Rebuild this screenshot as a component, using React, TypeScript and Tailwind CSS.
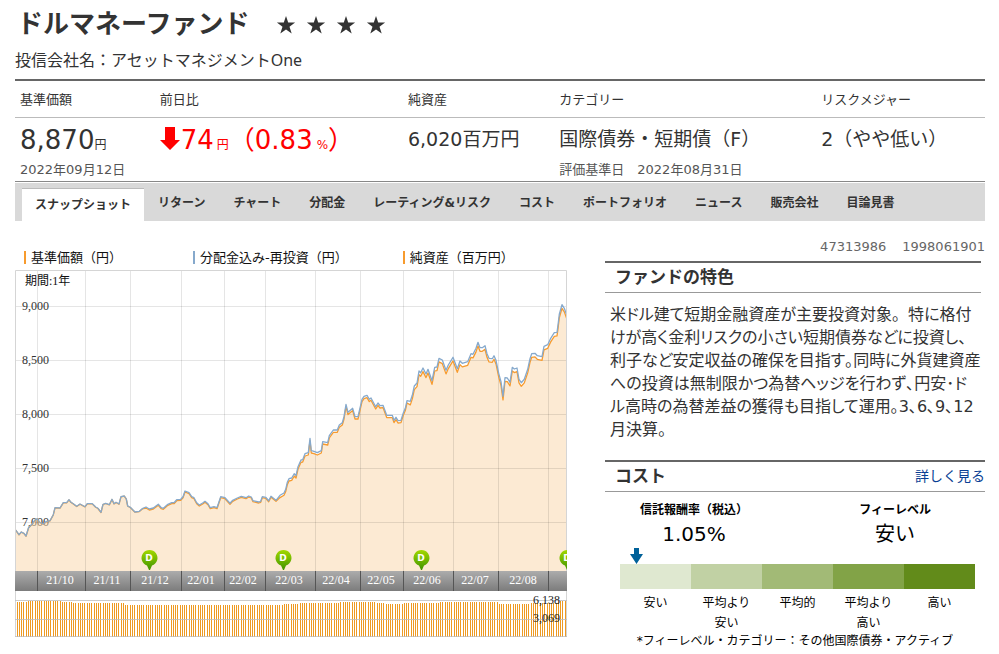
const stats = {
  th: 'pt-[2px] pl-[5px] text-left align-top font-normal text-[13px] leading-[34px]',
  td: 'pl-[5px] align-top',
};

const tabs = [
  'リターン',
  'チャート',
  '分配金',
  'レーティング&リスク',
  'コスト',
  'ポートフォリオ',
  'ニュース',
  '販売会社',
  '目論見書',
];

const feeLevels = [
  { label: '安い', color: 'bg-[#dfe8d0]' },
  { label: '平均より安い', color: 'bg-[#c1d1a4]' },
  { label: '平均的', color: 'bg-[#a2ba76]' },
  { label: '平均より高い', color: 'bg-[#82a347]' },
  { label: '高い', color: 'bg-[#628b1a]' },
];

// x, y pairs of the reinvested price line
const line = [
  [0.7, 260], [4, 264.7], [6.3, 262], [9, 263.3], [11, 266], [13.7, 257.3], [17, 254.3], [20, 250],
  [22.3, 248.7], [24.3, 252], [28.3, 254], [31, 251.7], [35, 250.7], [38.3, 244.7], [40, 237.7],
  [45, 238], [48.3, 232.7], [51.7, 232.7], [54, 229.7], [56, 232.3], [58.3, 233.7], [61.7, 236.3],
  [65, 234], [70, 236.7], [72.3, 233.7], [77.3, 233.7], [80.7, 237], [83, 238.3], [86, 242.3],
  [88, 234.3], [90.7, 233.3], [94.3, 234.7], [97, 229.3], [99, 233.7], [101, 232.3], [104, 234],
  [106, 226.7], [109.3, 226], [111.3, 229], [112.7, 236], [115.3, 237.3], [120, 242], [124.3, 241.3],
  [127.3, 238.7], [131, 237], [134.3, 239], [138.3, 238], [143.3, 234.3], [146.3, 237.7],
  [148.3, 238.3], [152.3, 234.7], [156.7, 232.7], [159, 232.7], [161.7, 229.7], [165.7, 229.3],
  [168, 226.7], [170, 221], [174, 222.7], [176.7, 226.7], [179, 227.7], [181.7, 232.7], [184.3, 235],
  [187.7, 233], [190, 231.3], [193, 233.7], [195.3, 237.7], [199, 236.7], [202, 237.7],
  [205.7, 226.7], [210, 227.7], [215, 233.3], [217.7, 230.3], [222.3, 228], [226.3, 226.3],
  [231, 227.7], [233.7, 226], [236.3, 227], [238, 230.7], [243.7, 232], [245.7, 231.3],
  [247.3, 226.7], [250.7, 227.3], [253.7, 230.7], [256, 226.3], [261, 230.3], [265, 225.3],
  [269, 223], [270.7, 219.3], [272.3, 212.3], [274, 208.7], [276.7, 208], [279.3, 203.7],
  [281, 205.7], [283, 196.7], [286, 190], [287.7, 189.7], [290, 183.7], [293.3, 182.7],
  [295, 168.3], [296.3, 180.7], [299, 181.3], [302.3, 182.7], [306.3, 180.7], [307.7, 171.7],
  [312.7, 172.7], [314.3, 165.7], [318.3, 160], [322.3, 160], [324.3, 155], [327.3, 152.7],
  [329, 146.7], [331, 134.3], [333, 142.3], [337.7, 138.3], [340, 146.7], [343, 146.7], [347, 129.3],
  [349, 126.3], [352, 125.3], [354.3, 129.3], [356, 128], [360.7, 136.7], [363, 133], [365, 135.7],
  [368, 135.3], [371.7, 145.3], [377.3, 145.3], [379, 150.3], [381, 147.3], [383, 150.7],
  [386, 150.3], [388.3, 143], [390.3, 138.3], [392, 130.7], [395.3, 131.3], [397.3, 125.3],
  [399.3, 116], [402, 113], [404, 101], [405.7, 102.7], [408, 98], [411, 104], [413, 99.3],
  [417, 110.7], [419.7, 97.3], [422, 97], [424, 88.3], [427.3, 90], [431, 100.3], [433.3, 95],
  [438, 87.3], [442.3, 98.7], [445, 91], [447.3, 93.3], [452.7, 91.7], [456, 83.7], [458, 84.3],
  [461, 78.3], [463, 72.3], [465, 77.7], [467.3, 77.7], [470, 75.7], [472, 83.7], [474, 88.3],
  [477.3, 88.7], [479, 85.7], [481, 90.3], [483.7, 103.3], [486, 111.7], [488, 126.3], [490, 107.7],
  [492.3, 108], [495, 112.3], [497.3, 97.3], [499.3, 99], [502, 98], [504, 109.3], [506.3, 112.7],
  [509.3, 109.3], [512.7, 99.3], [515, 88.7], [516.7, 83.7], [520, 83.3], [522.3, 85.7],
  [527, 86.7], [529, 76.3], [532.7, 74.7], [535.7, 68.3], [539.3, 62.7], [542, 62.3], [543, 55],
  [544.3, 44.3], [547, 34.7], [549.3, 38.3], [551.7, 45],
];

// the plain price falls further behind after every distribution
const gap = (x: number) => (x < 130 ? 0.2 : x < 265 ? 1 : x < 395 ? 2.3 : 3.6);

const totalPoints = line.map(([x, y]) => `${x},${y}`).join(' ');
const pricePoints = line.map(([x, y]) => `${x},${y + gap(x)}`).join(' ');

const monthLines = [22, 70, 115, 166, 209, 250, 300, 345, 388, 438, 483, 533];
const months = [
  { x: 45, label: '21/10' },
  { x: 92, label: '21/11' },
  { x: 140, label: '21/12' },
  { x: 186, label: '22/01' },
  { x: 228, label: '22/02' },
  { x: 274, label: '22/03' },
  { x: 321, label: '22/04' },
  { x: 366, label: '22/05' },
  { x: 412, label: '22/06' },
  { x: 460, label: '22/07' },
  { x: 508, label: '22/08' },
];
const prices = [
  { y: 36, label: '9,000' },
  { y: 90, label: '8,500' },
  { y: 144, label: '8,000' },
  { y: 198, label: '7,500' },
  { y: 252, label: '7,000' },
];
const pins = [134, 268, 406, 552];

// [until x, top y] of the net asset bars
const assetTops = [
  [12, 332], [47, 331], [58, 332], [110, 333], [268, 335], [285, 334], [325, 333], [362, 332],
  [370, 333], [388, 334], [425, 333], [483, 332], [515, 334], [543, 333], [552, 331],
];
const bars = Array.from({ length: 243 }, (_, i) => {
  const x = 2 + Math.floor(i * 2.265);
  const top = assetTops.find(([end]) => x < end)?.[1] ?? 332;
  return { x, top };
});

function Chart() {
  return (
    <svg viewBox="0 0 552 367" className="block h-auto w-full" role="img" aria-label="基準価額チャート">
      <defs>
        <linearGradient id="axis" x1="0" y1="0" x2="0" y2="1">
          <stop offset="0" stopColor="#acacac" />
          <stop offset="1" stopColor="#7c7c7c" />
        </linearGradient>
        <linearGradient id="pin" x1="0" y1="0" x2="0" y2="1">
          <stop offset="0" stopColor="#a3d900" />
          <stop offset="1" stopColor="#3f9300" />
        </linearGradient>
      </defs>

      <g fontFamily="'Liberation Serif', 'Noto Sans CJK JP', serif" fontSize="12" fill="#333">
        <text x="10" y="15" fill="#111">期間:1年</text>
        {prices.map((p) => (
          <text key={p.label} x="7" y={p.y + 4}>{p.label}</text>
        ))}
      </g>

      <polygon points={`0,301 ${pricePoints} 552,301`} fill="#f9d5a7" fillOpacity="0.5" />
      <g fill="#000" fillOpacity="0.1">
        {prices.map((p) => (
          <rect key={p.y} x="0" y={p.y} width="552" height="1" />
        ))}
        {monthLines.map((x) => (
          <rect key={x} x={x} y="0" width="1" height="301" />
        ))}
      </g>
      <g fill="none" strokeWidth="1.3" strokeLinejoin="round">
        <polyline points={pricePoints} stroke="#f79b2e" />
        <polyline points={totalPoints} stroke="#86a9cc" />
      </g>
      <path d="M0.5 367V0.5H551.5V367" fill="none" stroke="#d5d5d5" />

      <rect x="0" y="301" width="552" height="20" fill="url(#axis)" />
      {monthLines.map((x) => (
        <rect key={x} x={x} y="301" width="1" height="20" fill="#555" />
      ))}
      <g fontFamily="'Liberation Serif', serif" fontSize="12" fill="#fff" textAnchor="middle">
        {months.map((m) => (
          <text key={m.label} x={m.x} y="314">{m.label}</text>
        ))}
      </g>

      {pins.map((x) => (
        <g key={x}>
          <path
            d={`M${x} 300 L${x - 2} 295.5 A8 8 0 1 1 ${x + 3} 295.5 L${x + 1} 300Z`}
            fill="url(#pin)"
          />
          <text
            x={x}
            y="291"
            fontFamily="'DejaVu Sans', sans-serif"
            fontSize="9"
            fontWeight="bold"
            fill="#fff"
            textAnchor="middle"
          >
            D
          </text>
        </g>
      ))}

      <g shapeRendering="crispEdges">
        {bars.map((b) => (
          <rect key={b.x} x={b.x} y={b.top} width="1" height={367 - b.top} fill="#ee9a22" />
        ))}
        <path d="M0 330.5H552M0 349.5H552M0 366.5H552" stroke="#bbb" strokeOpacity="0.75" />
      </g>
      <g fontFamily="'Liberation Serif', serif" fontSize="12" fill="#222">
        <text x="518" y="334">6,138</text>
        <text x="518" y="352">3,069</text>
      </g>
    </svg>
  );
}

export default function App() {
  return (
    <main className="bg-white pr-[14px] pb-1 pl-[15px] font-['DejaVu_Sans','Noto_Sans_CJK_JP',sans-serif] text-[#333]">
      <header className="border-b-2 border-[#666]">
        <div className="flex h-12 items-center gap-[26px] pl-[2px]">
          <h1 className="text-[26px] leading-10 font-bold">ドルマネーファンド</h1>
          <div className="flex gap-2 pt-[2px]" aria-label="4つ星">
            {[1, 2, 3, 4].map((n) => (
              <svg key={n} viewBox="0 0 22 22" className="size-[22px]" fill="#333">
                <path d="M11 2l2.2 6.6h6.9l-5.6 4.1 2.2 6.8L11 15.4l-5.7 4.1 2.2-6.8-5.6-4.1h6.9z" />
              </svg>
            ))}
          </div>
        </div>
        <p className="h-[31px] font-['Noto_Sans','Noto_Sans_CJK_JP',sans-serif] text-base leading-6">投信会社名：アセットマネジメントOne</p>
      </header>

      <table className="w-full table-fixed border-b border-[#888]">
        <colgroup>
          <col className="w-[14.4%]" />
          <col className="w-[25.6%]" />
          <col className="w-[15.6%]" />
          <col className="w-[27%]" />
          <col />
        </colgroup>
        <thead>
          <tr className="border-b border-[#bbb]">
            <th className={stats.th}>基準価額</th>
            <th className={stats.th}>前日比</th>
            <th className={stats.th}>純資産</th>
            <th className={stats.th}>カテゴリー</th>
            <th className={stats.th}>リスクメジャー</th>
          </tr>
        </thead>
        <tbody>
          <tr className="whitespace-nowrap">
            <td className={stats.td}>
              <div className="h-10 text-[26px] leading-[44px]">
                8,870<span className="text-xs">円</span>
              </div>
              <div className="text-[13px] leading-[23px] text-[#555]">2022年09月12日</div>
            </td>
            <td className={stats.td}>
              <div className="flex h-10 items-baseline text-[26px] leading-[44px] text-[#f00]">
                <svg viewBox="0 0 20 24" className="mr-px h-6 w-5 self-center" fill="#f00">
                  <path d="M5 1h10v13h5L10 24 0 14h5z" />
                </svg>
                74<span className="ml-[3px] text-xs">円</span>
                <span>（0.83</span>
                <span className="ml-1 text-xs">%</span>）
              </div>
            </td>
            <td className={stats.td}>
              <div className="text-[19px] leading-[42px]">6,020百万円</div>
            </td>
            <td className={stats.td}>
              <div className="h-10 text-[19px] leading-[42px]">国際債券・短期債（F）</div>
              <div className="text-[13px] leading-[23px] text-[#555]">評価基準日　2022年08月31日</div>
            </td>
            <td className={stats.td}>
              <div className="text-[19px] leading-[42px]">2（やや低い）</div>
            </td>
          </tr>
        </tbody>
      </table>

      <nav className="mt-px flex h-[38px] items-end bg-[#d9d9d9] pl-[7px] text-xs font-bold whitespace-nowrap">
        <a href="#snapshot" className="border-t border-[#bbb] bg-white px-[13px] leading-8">
          スナップショット
        </a>
        {tabs.map((tab) => (
          <a key={tab} href="#tab" className="px-[14px] leading-9">
            {tab}
          </a>
        ))}
      </nav>

      <div className="flex gap-[38px]">
        <section className="min-w-0 flex-1 pt-6">
          <ul className="flex h-[25px] text-[13px] leading-5 text-[#111]">
            <li className="flex w-[31%] items-center gap-[5px] pl-[9px]">
              <span className="h-[13px] w-[2px] bg-[#f79b2e]" />
              基準価額（円）
            </li>
            <li className="flex w-[38%] items-center gap-[5px] pl-[7px]">
              <span className="h-[13px] w-[2px] bg-[#86a9cc]" />
              分配金込み-再投資（円）
            </li>
            <li className="flex items-center gap-[5px] pl-[7px]">
              <span className="h-[13px] w-[2px] bg-[#f79b2e]" />
              純資産（百万円）
            </li>
          </ul>
          <Chart />
        </section>

        <aside className="w-[380px] shrink-0 pt-[17px]">
          <p className="flex justify-end gap-4 text-[13px] leading-[18px] text-[#666]">
            <span>47313986</span>
            <span>1998061901</span>
          </p>
          <section className="mt-[5px] mr-1">
            <h2 className="border-t-2 border-b border-t-[#666] border-b-[#999] pl-[10px] text-[17px] leading-[29px] font-bold">
              ファンドの特色
            </h2>
            <p className="mt-[10px] ml-[5px] text-base leading-[23px] whitespace-nowrap [font-feature-settings:'palt']">
              米ドル建て短期金融資産が主要投資対象
              <span className="[font-feature-settings:normal]">。</span>特に格付
              <br />
              けが高く金利リスクの小さい短期債券などに投資し、
              <br />
              利子など安定収益の確保を目指す｡同時に外貨建資産
              <br />
              への投資は無制限かつ為替ヘッジを行わず､円安･ド
              <br />
              ル高時の為替差益の獲得も目指して運用｡3､6､9､12
              <br />
              月決算。
            </p>
          </section>

          <section className="mt-[19px] text-black">
            <div className="flex items-center justify-between border-t-2 border-b border-t-[#666] border-b-[#999] pl-[10px] leading-[29px]">
              <h2 className="text-[17px] font-bold text-[#333]">コスト</h2>
              <a href="#cost" className="text-sm leading-[29px] text-[#0a3f94]">
                詳しく見る
              </a>
            </div>
            <dl className="flex justify-between pt-2 pr-[54px] pl-[35px] text-center">
              <div>
                <dt className="text-xs leading-5 font-bold">信託報酬率（税込）</dt>
                <dd className="text-xl leading-7">1.05%</dd>
              </div>
              <div>
                <dt className="text-xs leading-5 font-bold">フィーレベル</dt>
                <dd className="text-xl leading-7">安い</dd>
              </div>
            </dl>
            <div className="pr-[10px] pl-[15px]">
              <svg viewBox="0 0 13 16" className="ml-[10px] h-4 w-[13px]" fill="#006199">
                <path d="M4 0h5v6h4L6.500 16 0 6h4z" />
              </svg>
              <ul className="grid grid-cols-5 text-center text-xs leading-5">
                {feeLevels.map((level) => (
                  <li key={level.label}>
                    <div className={`h-[25px] ${level.color}`} />
                    <p className="px-2 pt-1">{level.label}</p>
                  </li>
                ))}
              </ul>
            </div>
            <p className="text-center text-xs leading-4">*フィーレベル・カテゴリー：その他国際債券・アクティブ</p>
          </section>
        </aside>
      </div>
    </main>
  );
}
